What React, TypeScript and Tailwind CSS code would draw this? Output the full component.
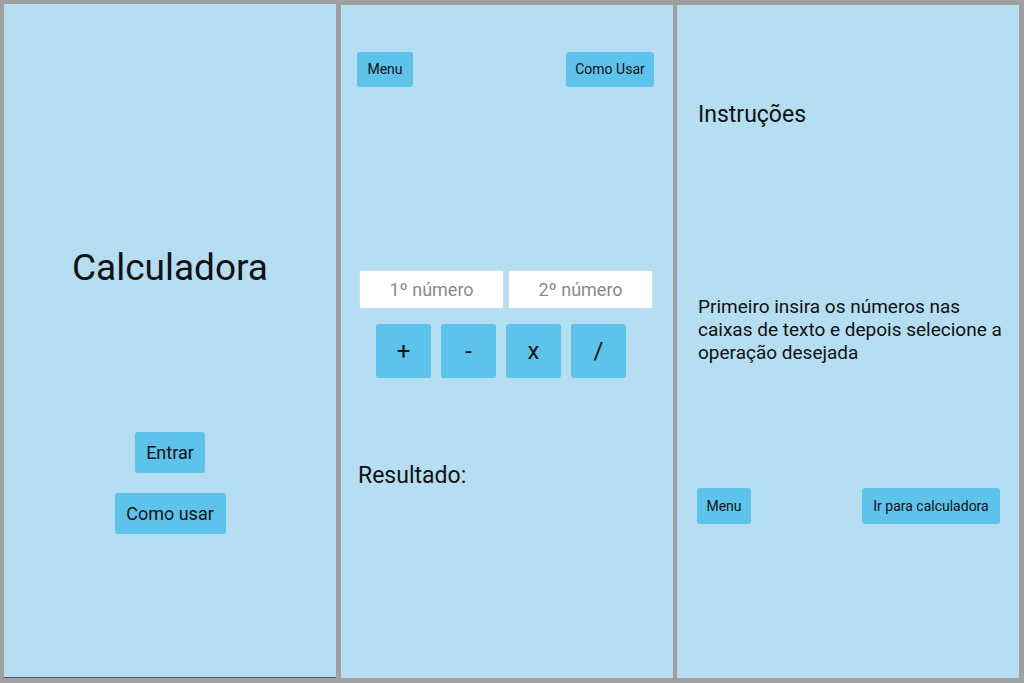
import React from "react";

const btn = "bg-[#5dc3ea] rounded-[3px] text-[#111] flex items-center justify-center";

export default function App() {
  return (
    <div
      className="w-[1024px] h-[683px] bg-[#a0a0a0] flex items-start pl-[4px] pt-[4px] overflow-hidden"
      style={{ fontFamily: "Roboto, 'Liberation Sans', sans-serif" }}
    >
      {/* Panel 1 */}
      <div className="w-[332px] h-[674px] bg-[#b5def2] border-b border-[#4a5a63] flex flex-col items-center">
        <div className="mt-[244px] h-[40px] text-[37px] leading-[40px] text-[#111]">Calculadora</div>
        <div className={`${btn} mt-[144px] w-[70px] h-[41px] text-[18px]`}>Entrar</div>
        <div className={`${btn} mt-[20px] w-[111px] h-[41px] text-[18px]`}>Como usar</div>
      </div>

      {/* Panel 2 */}
      <div className="ml-[5px] mt-[1px] w-[332px] h-[673px] bg-[#b5def2] flex flex-col">
        <div className="mt-[47px] pl-[16px] pr-[19px] flex justify-between">
          <div className={`${btn} w-[56px] h-[35px] text-[14px]`}>Menu</div>
          <div className={`${btn} w-[88px] h-[35px] text-[14px]`}>Como Usar</div>
        </div>
        <div className="mt-[183px] pl-[18px] flex gap-[4px]">
          <div className="w-[145px] h-[39px] bg-white border border-[#c9dde6] flex items-center justify-center text-[18px] text-[#8a8a8a]">
            1º número
          </div>
          <div className="w-[145px] h-[39px] bg-white border border-[#c9dde6] flex items-center justify-center text-[18px] text-[#8a8a8a]">
            2º número
          </div>
        </div>
        <div className="mt-[15px] pl-[35px] flex gap-[10px]">
          <div className={`${btn} w-[55px] h-[54px] text-[24px]`}>+</div>
          <div className={`${btn} w-[55px] h-[54px] text-[24px]`}>-</div>
          <div className={`${btn} w-[55px] h-[54px] text-[24px]`}>x</div>
          <div className={`${btn} w-[55px] h-[54px] text-[24px]`}>/</div>
        </div>
        <div className="mt-[84px] pl-[17px] text-[23px] leading-[28px] text-[#111]">Resultado:</div>
      </div>

      {/* Panel 3 */}
      <div className="ml-[4px] mt-[1px] w-[342px] h-[673px] bg-[#b5def2] flex flex-col">
        <div className="mt-[96px] pl-[21px] text-[23px] leading-[28px] text-[#111]">Instruções</div>
        <div className="mt-[166px] pl-[21px] pr-[10px] text-[19px] leading-[23px] text-[#111]">
          Primeiro insira os números nas caixas de texto e depois selecione a operação desejada
        </div>
        <div className="mt-[124px] pl-[20px] pr-[19px] flex justify-between">
          <div className={`${btn} w-[54px] h-[36px] text-[14px]`}>Menu</div>
          <div className={`${btn} w-[138px] h-[36px] text-[14px]`}>Ir para calculadora</div>
        </div>
      </div>
    </div>
  );
}
